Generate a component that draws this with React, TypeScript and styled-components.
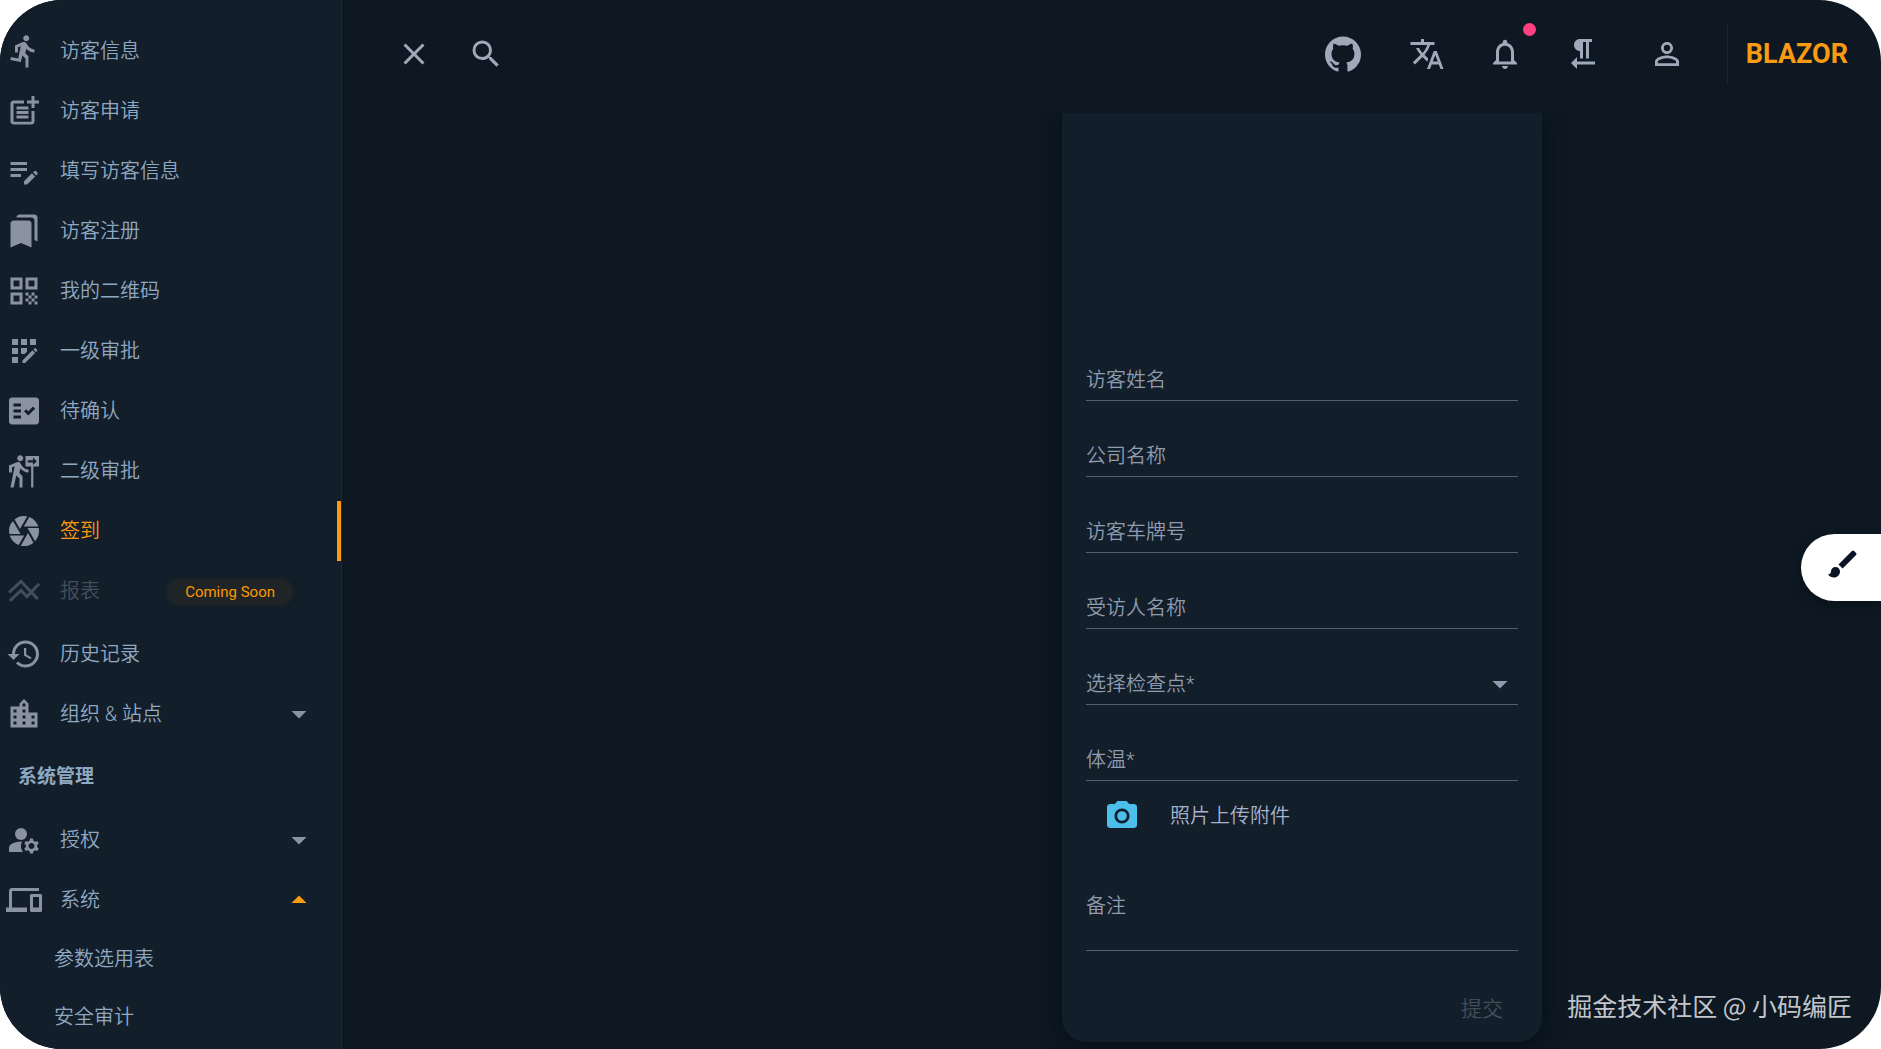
import React from "react";
import styled, { createGlobalStyle, css } from "styled-components";
import type { IconType } from "react-icons";
import {
  MdDirectionsRun,
  MdPostAdd,
  MdEditNote,
  MdBookmarks,
  MdQrCode,
  MdAppRegistration,
  MdFactCheck,
  MdFollowTheSigns,
  MdCamera,
  MdHistory,
  MdLocationCity,
  MdManageAccounts,
  MdDevices,
  MdArrowDropDown,
  MdArrowDropUp,
  MdClose,
  MdSearch,
  MdTranslate,
  MdNotificationsNone,
  MdFormatTextdirectionRToL,
  MdPersonOutline,
  MdCameraAlt,
  MdBrush,
} from "react-icons/md";
import { SiGithub } from "react-icons/si";

const color = {
  background: "#0d1822",
  surface: "#131e2b",
  line: "#1d2936",
  navText: "#90a9c2",
  navIcon: "#8a939f",
  appbarIcon: "#a0a9ba",
  accent: "#f99b12",
  label: "#8f9bae",
  underline: "#53606e",
  disabled: "#434e5a",
  info: "#4bbfe9",
  alert: "#ff4081",
};

const GlobalStyle = createGlobalStyle`
  *, *::before, *::after { box-sizing: border-box; }
  body {
    margin: 0;
    background: #fff;
    font-family: Roboto, "Noto Sans CJK SC", sans-serif;
    font-size: 20px;
  }
  button, input, select, textarea { font: inherit; color: inherit; }
`;

const Shell = styled.div`
  position: relative;
  display: flex;
  height: 100vh;
  overflow: hidden;
  border-radius: 62px;
  background: ${color.background};
`;

/* ---------- navigation drawer ---------- */

const Drawer = styled.nav`
  flex: none;
  width: 342px;
  padding-top: 21px;
  overflow: hidden;
  background: ${color.surface};
  border-right: 1px solid ${color.line};
`;

const NavList = styled.ul`
  margin: 0;
  padding: 0;
  list-style: none;
`;

const rowStyle = css`
  display: flex;
  align-items: center;
  width: 100%;
  border: 0;
  background: none;
  color: ${color.navText};
  font-weight: 350;
  line-height: 24px;
  text-align: left;
  text-decoration: none;
`;

const NavLink = styled.a<{ $active?: boolean; $disabled?: boolean }>`
  ${rowStyle}
  height: 60px;
  padding: 0 24px 0 6px;
  gap: 18px;
  border-right: 4px solid transparent;
  ${(p) => p.$active && `color: ${color.accent}; border-right-color: ${color.accent};`}
  ${(p) =>
    p.$disabled &&
    `color: ${color.disabled}; margin-bottom: 3px; cursor: default; svg { color: ${color.disabled}; }`}
`;

const NavGroup = styled.button`
  ${rowStyle}
  height: 60px;
  padding: 0 24px 0 6px;
  gap: 18px;
  cursor: pointer;
`;

const NavIcon = styled.span<{ $accent?: boolean }>`
  display: flex;
  flex: none;
  font-size: 36px;
  color: ${(p) => (p.$accent ? color.accent : color.navIcon)};
`;

const NavLabel = styled.span`
  flex: 1;
  padding-bottom: 1px;
`;

const NavHeading = styled.h2`
  margin: 0;
  padding: 21px 18px;
  color: ${color.navText};
  font-size: 19px;
  font-weight: 700;
  line-height: 24px;
`;

const SubLink = styled.a`
  ${rowStyle}
  height: 58px;
  padding-left: 54px;
`;

const Chip = styled.span`
  padding: 0 18px;
  margin: 2px 20px 0 0;
  border-radius: 13px;
  background: #1f2427;
  box-shadow: 0 0 4px #1f2427;
  color: #ff9800;
  font-size: 15px;
  font-weight: 400;
  line-height: 26px;
`;

/* ---------- app bar ---------- */

const Page = styled.div`
  display: flex;
  flex: 1;
  flex-direction: column;
  min-width: 0;
`;

const AppBar = styled.header`
  display: flex;
  flex: none;
  align-items: center;
  height: 113px;
  padding: 0 33px 5px 36px;
`;

const Spacer = styled.div`
  flex: 1;
`;

const Actions = styled.div`
  display: flex;
  gap: 12px;
`;

const ActionGroup = styled.div`
  display: flex;
  gap: 6px;
`;

const IconButton = styled.button`
  position: relative;
  display: flex;
  padding: 18px;
  border: 0;
  background: none;
  color: ${color.appbarIcon};
  font-size: 36px;
  cursor: pointer;
`;

const AlertDot = styled.span`
  position: absolute;
  top: 5px;
  right: 5px;
  width: 13px;
  height: 13px;
  border-radius: 50%;
  background: ${color.alert};
`;

const Brand = styled.div`
  margin-left: 24px;
  padding-left: 18px;
  border-left: 1px solid #182430;
  color: ${color.accent};
  font-size: 27px;
  font-weight: 700;
  line-height: 60px;
`;

/* ---------- check-in form ---------- */

const Content = styled.main`
  display: grid;
  flex: 1;
  grid-template-columns: 720fr 480px 339fr;
  align-items: start;
  overflow: hidden;
`;

const Card = styled.form`
  grid-column: 2;
  padding: 24px 24px 11px;
  border-radius: 0 0 24px 24px;
  background: ${color.surface};
  box-shadow: 0 4px 20px rgba(0, 8, 14, 0.6);
`;

const Preview = styled.div`
  height: 188px;
`;

const Field = styled.div<{ $multiline?: boolean }>`
  display: grid;
  grid-template-columns: 1fr auto;
  align-items: end;
  height: ${(p) => (p.$multiline ? "102px" : "76px")};
  padding-bottom: ${(p) => (p.$multiline ? "32px" : "8px")};
  border-bottom: 1px solid ${color.underline};
  color: ${color.label};
`;

const FieldLabel = styled.label`
  grid-area: 1 / 1;
  font-weight: 350;
  line-height: 24px;
  pointer-events: none;
`;

const controlStyle = css`
  grid-area: 1 / 1 / 2 / 3;
  width: 100%;
  min-width: 0;
  height: 24px;
  padding: 0;
  border: 0;
  outline: 0;
  appearance: none;
  background: transparent;
  line-height: 24px;
`;

const TextInput = styled.input`
  ${controlStyle}
`;

const SelectInput = styled.select`
  ${controlStyle}
`;

const TextArea = styled.textarea`
  ${controlStyle}
  resize: none;
`;

const SelectArrow = styled.span`
  display: flex;
  grid-area: 1 / 2;
  height: 24px;
  align-items: center;
  font-size: 36px;
  pointer-events: none;
`;

const UploadRow = styled.div`
  display: flex;
  align-items: center;
  height: 68px;
  padding: 2px 0 0 18px;
  gap: 30px;
  color: #a9b2cd;
  font-weight: 350;
  line-height: 24px;
`;

const UploadButton = styled.button`
  display: flex;
  padding: 0;
  border: 0;
  background: none;
  color: ${color.info};
  font-size: 36px;
  cursor: pointer;
`;

const CardActions = styled.div`
  display: flex;
  justify-content: flex-end;
  padding-top: 32px;
`;

const SubmitButton = styled.button`
  height: 48px;
  padding: 0 15px;
  border: 0;
  background: none;
  color: ${color.disabled};
  font-size: 21px;
  font-weight: 350;
`;

/* ---------- overlays ---------- */

const ThemeButton = styled.button`
  position: absolute;
  top: 534px;
  right: 0;
  display: flex;
  align-items: center;
  width: 80px;
  height: 67px;
  padding: 0 0 8px 24px;
  border: 0;
  border-radius: 34px 0 0 34px;
  background: #fff;
  box-shadow: 0 4px 12px rgba(0, 0, 0, 0.3);
  color: #0a1424;
  font-size: 36px;
  cursor: pointer;
`;

const Watermark = styled.div`
  position: absolute;
  right: 29px;
  bottom: 26px;
  color: #c3c6cb;
  font-family: "Noto Sans CJK SC", sans-serif;
  font-size: 25px;
  line-height: 36px;
`;

function PeaksIcon() {
  return (
    <svg width="1em" height="1em" viewBox="0 0 24 24" fill="none" stroke="currentColor" strokeWidth="2">
      <path d="M2 13 10 5.6l11.2 11.7M2.6 18.6l7.4-7 4 4.1 8.1-8.5" />
    </svg>
  );
}

type NavItem = {
  label: string;
  icon: IconType | typeof PeaksIcon;
  active?: boolean;
  chip?: string;
};

const navItems: NavItem[] = [
  { label: "访客信息", icon: MdDirectionsRun },
  { label: "访客申请", icon: MdPostAdd },
  { label: "填写访客信息", icon: MdEditNote },
  { label: "访客注册", icon: MdBookmarks },
  { label: "我的二维码", icon: MdQrCode },
  { label: "一级审批", icon: MdAppRegistration },
  { label: "待确认", icon: MdFactCheck },
  { label: "二级审批", icon: MdFollowTheSigns },
  { label: "签到", icon: MdCamera, active: true },
  { label: "报表", icon: PeaksIcon, chip: "Coming Soon" },
  { label: "历史记录", icon: MdHistory },
];

const textFields = ["访客姓名", "公司名称", "访客车牌号", "受访人名称"];

function Group({ label, icon: Icon, open, children }: { label: string; icon: IconType; open?: boolean; children?: React.ReactNode }) {
  return (
    <li>
      <NavGroup type="button" aria-expanded={!!open}>
        <NavIcon><Icon /></NavIcon>
        <NavLabel>{label}</NavLabel>
        <NavIcon $accent={open}>{open ? <MdArrowDropUp /> : <MdArrowDropDown />}</NavIcon>
      </NavGroup>
      {open && <NavList>{children}</NavList>}
    </li>
  );
}

function TextField({ id, label }: { id: string; label: string }) {
  return (
    <Field>
      <FieldLabel htmlFor={id}>{label}</FieldLabel>
      <TextInput id={id} type="text" />
    </Field>
  );
}

export default function App() {
  return (
    <>
      <GlobalStyle />
      <Shell>
        <Drawer>
          <NavList>
            {navItems.map(({ label, icon: Icon, active, chip }) => (
              <li key={label}>
                <NavLink href="#" $active={active} $disabled={!!chip}>
                  <NavIcon><Icon /></NavIcon>
                  <NavLabel>{label}</NavLabel>
                  {chip && <Chip>{chip}</Chip>}
                </NavLink>
              </li>
            ))}
            <Group label="组织 & 站点" icon={MdLocationCity} />
          </NavList>
          <NavHeading>系统管理</NavHeading>
          <NavList>
            <Group label="授权" icon={MdManageAccounts} />
            <Group label="系统" icon={MdDevices} open>
              <li><SubLink href="#"><NavLabel>参数选用表</NavLabel></SubLink></li>
              <li><SubLink href="#"><NavLabel>安全审计</NavLabel></SubLink></li>
            </Group>
          </NavList>
        </Drawer>

        <Page>
          <AppBar>
            <IconButton type="button" aria-label="close"><MdClose /></IconButton>
            <IconButton type="button" aria-label="search"><MdSearch /></IconButton>
            <Spacer />
            <Actions>
              <IconButton type="button" aria-label="github"><SiGithub /></IconButton>
              <ActionGroup>
                <IconButton type="button" aria-label="language"><MdTranslate /></IconButton>
                <IconButton type="button" aria-label="notifications">
                  <MdNotificationsNone />
                  <AlertDot />
                </IconButton>
                <IconButton type="button" aria-label="text direction"><MdFormatTextdirectionRToL /></IconButton>
              </ActionGroup>
              <IconButton type="button" aria-label="account"><MdPersonOutline /></IconButton>
            </Actions>
            <Brand>BLAZOR</Brand>
          </AppBar>

          <Content>
            <Card>
              <Preview />
              {textFields.map((label, i) => (
                <TextField key={label} id={`field-${i}`} label={label} />
              ))}
              <Field>
                <FieldLabel htmlFor="checkpoint">选择检查点*</FieldLabel>
                <SelectInput id="checkpoint" defaultValue="">
                  <option value="" />
                </SelectInput>
                <SelectArrow><MdArrowDropDown /></SelectArrow>
              </Field>
              <TextField id="temperature" label="体温*" />
              <UploadRow>
                <UploadButton type="button" aria-label="photo"><MdCameraAlt /></UploadButton>
                <span>照片上传附件</span>
              </UploadRow>
              <Field $multiline>
                <FieldLabel htmlFor="remark">备注</FieldLabel>
                <TextArea id="remark" rows={1} />
              </Field>
              <CardActions>
                <SubmitButton type="submit" disabled>提交</SubmitButton>
              </CardActions>
            </Card>
          </Content>
        </Page>

        <ThemeButton type="button" aria-label="theme"><MdBrush /></ThemeButton>
        <Watermark>掘金技术社区 @ 小码编匠</Watermark>
      </Shell>
    </>
  );
}
